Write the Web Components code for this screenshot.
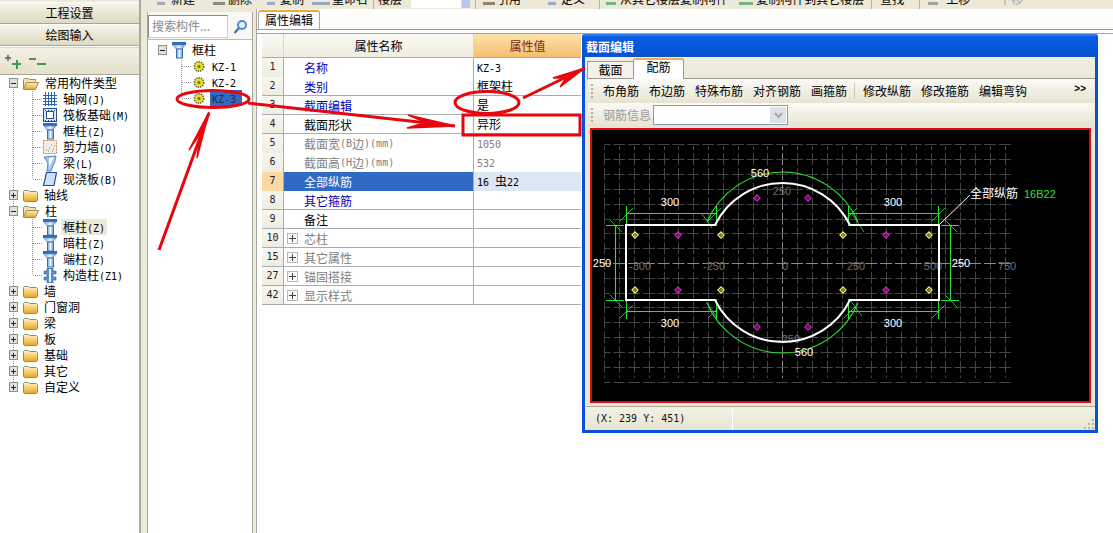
<!DOCTYPE html>
<html lang="zh">
<head>
<meta charset="utf-8">
<title>截面编辑</title>
<style>
html,body{margin:0;padding:0;height:533px;overflow:hidden;background:#ECE9D8}
body{font:12px/16px "Noto Sans CJK SC","Liberation Sans",sans-serif;color:#000}
.m{font-family:"DejaVu Sans Mono","Liberation Mono",monospace;font-size:10px}
</style>
</head>
<body>
<app-shell>
  <side-panel slot="left">
    <tree-row level="0" exp="-" icon="folderopen" first>常用构件类型</tree-row>
    <tree-row level="1" icon="grid">轴网<span class="m">(J)</span></tree-row>
    <tree-row level="1" icon="raft">筏板基础<span class="m">(M)</span></tree-row>
    <tree-row level="1" icon="column">框柱<span class="m">(Z)</span></tree-row>
    <tree-row level="1" icon="wall">剪力墙<span class="m">(Q)</span></tree-row>
    <tree-row level="1" icon="beam">梁<span class="m">(L)</span></tree-row>
    <tree-row level="1" icon="slab" last>现浇板<span class="m">(B)</span></tree-row>
    <tree-row level="0" exp="+" icon="folder">轴线</tree-row>
    <tree-row level="0" exp="-" icon="folderopen">柱</tree-row>
    <tree-row level="1" icon="column" hover>框柱<span class="m">(Z)</span></tree-row>
    <tree-row level="1" icon="column">暗柱<span class="m">(Z)</span></tree-row>
    <tree-row level="1" icon="column">端柱<span class="m">(Z)</span></tree-row>
    <tree-row level="1" icon="cons" last>构造柱<span class="m">(Z1)</span></tree-row>
    <tree-row level="0" exp="+" icon="folder">墙</tree-row>
    <tree-row level="0" exp="+" icon="folder">门窗洞</tree-row>
    <tree-row level="0" exp="+" icon="folder">梁</tree-row>
    <tree-row level="0" exp="+" icon="folder">板</tree-row>
    <tree-row level="0" exp="+" icon="folder">基础</tree-row>
    <tree-row level="0" exp="+" icon="folder">其它</tree-row>
    <tree-row level="0" exp="+" icon="folder" last>自定义</tree-row>
  </side-panel>
  <top-toolbar slot="toolbar"></top-toolbar>
  <component-panel slot="list">
    <tree-row level="0" exp="-" icon="column" noline>框柱</tree-row>
    <tree-row level="1" icon="gear" noroot><span class="m">KZ-1</span></tree-row>
    <tree-row level="1" icon="gear" noroot><span class="m">KZ-2</span></tree-row>
    <tree-row level="1" icon="gear" noroot last sel><span class="m">KZ-3</span></tree-row>
  </component-panel>
  <prop-panel slot="main">
    <prop-row no="1" kind="link">名称<span slot="value" class="m">KZ-3</span></prop-row>
    <prop-row no="2" kind="link">类别<span slot="value">框架柱</span></prop-row>
    <prop-row no="3" kind="link">截面编辑<span slot="value">是</span></prop-row>
    <prop-row no="4">截面形状<span slot="value">异形</span></prop-row>
    <prop-row no="5" kind="gray">截面宽<span class="m">(B</span>边<span class="m">)(mm)</span><span slot="value" class="m" style="color:#808080">1050</span></prop-row>
    <prop-row no="6" kind="gray">截面高<span class="m">(H</span>边<span class="m">)(mm)</span><span slot="value" class="m" style="color:#808080">532</span></prop-row>
    <prop-row no="7" kind="sel">全部纵筋<span slot="value"><span class="m">16 </span>虫<span class="m">22</span></span></prop-row>
    <prop-row no="8" kind="link">其它箍筋</prop-row>
    <prop-row no="9">备注</prop-row>
    <prop-row no="10" kind="gray" exp>芯柱</prop-row>
    <prop-row no="15" kind="gray" exp>其它属性</prop-row>
    <prop-row no="27" kind="gray" exp>锚固搭接</prop-row>
    <prop-row no="42" kind="gray" exp>显示样式</prop-row>
  </prop-panel>
  <section-dialog slot="overlay" caption="截面编辑">
    <rebar-canvas></rebar-canvas>
  </section-dialog>
  <red-marks slot="overlay"></red-marks>
</app-shell>

<script>
const ICONS = {
  folder:`<svg width="15" height="13" viewBox="0 0 15 13"><defs><linearGradient id="f" x1="0" y1="0" x2="0" y2="1"><stop offset="0" stop-color="#FFF6C8"/><stop offset="1" stop-color="#E9A51E"/></linearGradient></defs><path d="M.5 2.500 1.500 1.500h4l1 1h7l1 1v8l-1 1h-12l-1-1z" fill="url(#f)" stroke="#9A8A60"/></svg>`,
  folderopen:`<svg width="16" height="13" viewBox="0 0 16 13"><defs><linearGradient id="f" x1="0" y1="0" x2="0" y2="1"><stop offset="0" stop-color="#FFF2B8"/><stop offset="1" stop-color="#E9A51E"/></linearGradient></defs><path d="M.5 12V2.500l1-1h4l1 1h6v2" fill="#F3E3B0" stroke="#9A8A60"/><path d="M.5 12.500 3.500 5.500h12l-3 7z" fill="url(#f)" stroke="#9A8A60"/></svg>`,
  column:`<svg width="14" height="17" viewBox="0 0 14 17"><defs><linearGradient id="c" x1="0" y1="0" x2="1" y2="0"><stop offset="0" stop-color="#6FA0DC"/><stop offset=".5" stop-color="#F2F7FD"/><stop offset="1" stop-color="#5F90CC"/></linearGradient></defs><rect x="0" y="0" width="14" height="3" fill="#2F6DB8"/><path d="M1 3h12L10 7H4z" fill="url(#c)" stroke="#5F90CC" stroke-width=".6"/><rect x="4.500" y="7" width="6" height="9" fill="url(#c)" stroke="#2F6DB8"/></svg>`,
  grid:`<svg width="14" height="14" viewBox="0 0 14 14" stroke="#2E62B0" shape-rendering="crispEdges"><path d="M0 3.500h14M0 6.500h14M0 9.500h14M0 12.500h14M2.500 0v14M5.500 0v14M8.500 0v14M11.500 0v14" fill="none"/></svg>`,
  raft:`<svg width="14" height="14" viewBox="0 0 14 14" shape-rendering="crispEdges"><rect x=".5" y=".5" width="13" height="13" fill="#DDE8F6" stroke="#1F4F9A" stroke-width="1.200"/><rect x="3.500" y="3.500" width="7" height="7" fill="#fff" stroke="#1F4F9A"/><path d="M2 2h1M5 2h1M8 2h1M11 2h1M2 12h1M5 12h1M8 12h1M11 12h1" stroke="#1F4F9A"/></svg>`,
  wall:`<svg width="14" height="14" viewBox="0 0 14 14"><rect x=".5" y=".5" width="13" height="13" fill="#F2EEE6" stroke="#C88A50" stroke-dasharray="2 1"/><path d="M3 10h1M6 8h1M9 11h1M11 6h1M5 11h1M8 5h1M10 9h1" stroke="#8A8A90"/></svg>`,
  beam:`<svg width="14" height="17" viewBox="0 0 14 17"><path d="M1 2 13 1 12 6 8 16 4 16 5 8z" fill="#A9C8EA" stroke="#4F86C6"/><path d="M6 3 11 2 6 12z" fill="#fff"/></svg>`,
  slab:`<svg width="14" height="14" viewBox="0 0 14 14"><path d="M3.500 .5H13.500L11 13.500H.5z" fill="#CFE0F4" stroke="#1F4F9A" stroke-width="1.200"/></svg>`,
  cons:`<svg width="14" height="15" viewBox="0 0 14 15"><path d="M4 0h6v3h3v3h-3v3h3v3h-3v3H4v-3H1V9h3V6H1V3h3z" fill="#5F8ECC" stroke="#2F5FA8" stroke-width=".6"/><path d="M6 1h2v13H6z" fill="#E8F0FA"/></svg>`,
  gear:`<svg width="14" height="13" viewBox="0 0 14 13"><circle cx="7" cy="6.500" r="4.500" fill="#E7DC2E"/><circle cx="7" cy="6.500" r="4.800" fill="none" stroke="#5A5A20" stroke-width="1.400" stroke-dasharray="1.400 1"/><circle cx="7" cy="6.500" r="1.500" fill="#6A6A20"/></svg>`
};
function define(name, cls){ customElements.define(name, cls); }

define('ui-icon', class extends HTMLElement{
  connectedCallback(){
    if(this.shadowRoot) return;
    const s=this.attachShadow({mode:'open'});
    s.innerHTML=`<style>:host{display:inline-flex;align-items:center;justify-content:center}svg{display:block}</style>`+(ICONS[this.getAttribute('name')]||'');
  }
});

define('tree-row', class extends HTMLElement{
  connectedCallback(){
    if(this.shadowRoot) return;
    const a=n=>this.hasAttribute(n), lvl=+this.getAttribute('level');
    const dot='stroke="#9A9A9A" stroke-dasharray="1 1" shape-rendering="crispEdges"';
    let g='', w=lvl?43:23;
    if(lvl===0){
      if(!a('noline')) g+=`<path d="M13.500 ${a('first')?8:0}V${a('last')?8:16}" ${dot}/>`;
      const sign=this.getAttribute('exp');
      g+=`<rect x="9.500" y="3.500" width="8" height="9" fill="#E4E2D8" stroke="#8E8E8E" shape-rendering="crispEdges"/><path d="M11 8.500h5${sign==='+'?'M13.500 6v5':''}" stroke="#222" shape-rendering="crispEdges"/>`;
    }else{
      if(!a('noroot')) g+=`<path d="M13.500 0V16" ${dot}/>`;
      g+=`<path d="M32.500 0V${a('last')?8:16}M32.500 8.500H43" ${dot}/>`;
    }
    const s=this.attachShadow({mode:'open'});
    s.innerHTML=`<style>
      :host{display:flex;height:16px;align-items:center;white-space:nowrap}
      svg.g{flex:none;display:block}
      ui-icon{flex:none;height:16px}
      .l{margin-left:${lvl?4:6}px;padding:0 2px;line-height:16px;height:16px;${lvl?'':'padding-left:0;'}}
      :host([hover]) .l{background:#ECE9D8}
      :host([sel]) .l{background:#316AC5;color:#1c2a50;padding:0 6px 0 2px}
    </style><svg class="g" width="${w}" height="16">${g}</svg><ui-icon name="${this.getAttribute('icon')}"></ui-icon><span class="l"><slot></slot></span>`;
  }
});

define('app-shell', class extends HTMLElement{
  constructor(){super();this.attachShadow({mode:'open'}).innerHTML=`<style>
    :host{display:flex;position:relative;width:1113px;height:533px;overflow:hidden;background:#ECE9D8}
    .r{flex:1;display:flex;flex-direction:column;min-width:0}
    .b{flex:1;display:flex;min-height:0}
    ::slotted([slot=left]){flex:none}
  </style>
  <slot name="left"></slot>
  <div class="r"><slot name="toolbar"></slot><div class="b"><slot name="list"></slot><slot name="main"></slot></div></div>
  <slot name="overlay"></slot>`;}
});

define('side-button', class extends HTMLElement{
  constructor(){super();this.attachShadow({mode:'open'}).innerHTML=`<style>
    :host{display:flex;align-items:center;justify-content:center;height:20px;background:linear-gradient(#F6F4E9,#DDD9C3);border-top:1px solid #fff;border-bottom:1px solid #A9A691}
  </style><slot></slot>`;}
});

define('side-panel', class extends HTMLElement{
  constructor(){super();this.attachShadow({mode:'open'}).innerHTML=`<style>
    :host{display:flex;flex-direction:column;width:141px;height:533px;padding-top:2px;box-sizing:border-box;border-right:2px solid #A8A8A0;margin-right:6px;background:#fff;position:relative}
    .btns{background:#ECE9D8;margin-top:-2px;padding-top:2px}
    .tools{display:flex;align-items:flex-start;gap:2px;padding:6px 0 0 4px;box-sizing:border-box;background:linear-gradient(#F3F1E4,#E4E0CC);border-top:1px solid #D8D5C2;border-bottom:1px solid #A9A691;margin-top:1px;height:28px}
    .tree{flex:1}
    svg{display:block;flex:none}
  </style>
  <div class="btns"><side-button>工程设置</side-button><side-button>绘图输入</side-button></div>
  <div class="tools">
    <svg width="21" height="16" shape-rendering="crispEdges"><path d="M1 4h6M4 1v6" stroke="#777" stroke-width="2" fill="none"/><path d="M8 10h9M12.500 6v9" stroke="#3F9A4A" stroke-width="2"/></svg>
    <svg width="20" height="16" shape-rendering="crispEdges"><path d="M2 5h7" stroke="#777" stroke-width="2"/><path d="M10 10h9" stroke="#3F9A4A" stroke-width="2"/></svg>
  </div>
  <div class="tree"><slot></slot></div>`;}
});

define('top-toolbar', class extends HTMLElement{
  connectedCallback(){
    if(this.shadowRoot) return;
    const ic=(w,ml,c='#7F98BC')=>`<i style="width:${w}px;margin-left:${ml}px;background:${c}"></i>`;
    const tx=(t,ml,g)=>`<span style="margin-left:${ml}px${g?';color:#a8a8a0':''}">${t}</span>`;
    const sep=ml=>`<b style="margin-left:${ml}px"></b>`;
    this.attachShadow({mode:'open'}).innerHTML=`<style>
      :host{display:flex;flex:none;height:9px;overflow:hidden;align-items:flex-end;background:#ECE9D8;padding:0 0 3px 10px;box-sizing:border-box;white-space:nowrap}
      span{line-height:14px;flex:none;display:block;height:14px}
      i{display:block;height:3px;flex:none;margin-bottom:1px;opacity:.75}
      b{display:block;width:1px;height:9px;background:#B5B29E;flex:none;margin-bottom:-3px}
      u{display:block;flex:none;width:59px;height:8px;margin:0 0 -2px 9px;background:linear-gradient(90deg,#fff 85%,#B8C8E8 86%);text-decoration:none}
    </style>
    ${ic(8,0,'#8A97A8')}${tx('新建',6)}${ic(12,18,'#6A6A6A')}${tx('删除',3)}${ic(8,15)}${tx('复制',5)}${ic(18,8,'#8090B0')}${tx('重命名',2)}${sep(5)}${tx('楼层',4)}<u></u>${sep(5)}${ic(12,7,'#7A5A50')}${tx('引用',2)}${ic(8,27)}${tx('定义',5)}${sep(14)}${ic(10,6,'#4FA060')}${tx('从其它楼层复制构件',4)}${ic(14,11,'#4FA060')}${tx('复制构件到其它楼层',3)}${sep(7)}${tx('查找',8)}${sep(15)}${ic(10,8,'#8A8A8A')}${tx('上移',8)}${tx('下移',29,1)}`;
  }
});

define('component-panel', class extends HTMLElement{
  constructor(){super();this.attachShadow({mode:'open'}).innerHTML=`<style>
    :host{display:flex;flex-direction:column;flex:none;width:106px;margin-top:3px;box-sizing:border-box;border-left:1px solid #A8A8A0;border-right:1px solid #A8A8A0;margin-right:3px;background:#fff;height:521px}
    .s{display:flex;align-items:flex-start;height:28px;padding-top:3px;flex:none;background:#F8F7F2;box-sizing:border-box;border-bottom:1px solid #BDBCB0}
    .i{width:80px;height:23px;box-sizing:border-box;border:1px solid #8A8A8A;border-right-color:#ccc;border-bottom-color:#ccc;background:#fff;color:#8a8a8a;padding-left:3px;line-height:19px;white-space:nowrap;overflow:hidden}
    svg{margin:4px 0 0 4px;display:block}
    .t{padding:2px 0 0 1px}
  </style>
  <div class="s"><div class="i">搜索构件...</div>
    <svg width="16" height="16"><circle cx="10" cy="6" r="4" fill="#E6F0FA" stroke="#4A90D0" stroke-width="2"/><path d="M7 9 2.500 14" stroke="#3A7CC0" stroke-width="2.400"/></svg></div>
  <div class="t"><slot></slot></div>`;}
});

define('prop-panel', class extends HTMLElement{
  constructor(){super();this.attachShadow({mode:'open'}).innerHTML=`<style>
    :host{display:flex;flex-direction:column;flex:1;min-width:0;background:#fff;border-left:1px solid #A8A8A0;box-sizing:border-box;height:524px}
    .strip{height:21px;flex:none;box-sizing:border-box;border-bottom:1px solid #9A9A9A;background:linear-gradient(#fff,#FBFBF8);padding:1px 0 0 1px}
    .tab{width:62px;height:19px;box-sizing:border-box;border:1px solid #A8A8A0;border-bottom:0;border-top:2px solid #EDA93A;border-radius:3px 3px 0 0;background:#fff;text-align:center;line-height:16px}
    .body{flex:1;margin-top:3px;border-top:1px solid #8FA6B8;padding-left:5px}
    .grid{width:319px}
    .head{display:grid;grid-template-columns:22px 190px 107px;height:24px;line-height:23px;text-align:center;box-sizing:border-box;border-bottom:1px solid #A8ACB4}
    .head div{background:linear-gradient(#FBFAF5,#EFEDE1);border-right:1px solid #D8D6C8}
    .head div:last-child{background:linear-gradient(#FCE3AE,#F3BE6E);color:#7A2C10;border-right:0}
  </style>
  <div class="strip"><div class="tab">属性编辑</div></div>
  <div class="body"><div class="grid">
    <div class="head"><div></div><div>属性名称</div><div>属性值</div></div>
    <slot></slot>
  </div></div>`;}
});

define('prop-row', class extends HTMLElement{
  connectedCallback(){
    if(this.shadowRoot) return;
    const k=this.getAttribute('kind')||'', no=this.getAttribute('no'), exp=this.hasAttribute('exp');
    this.attachShadow({mode:'open'}).innerHTML=`<style>
      :host{display:grid;grid-template-columns:22px 190px 107px;height:19px;box-sizing:border-box;line-height:17px;white-space:nowrap}
      .n{background:${k==='sel'?'#FBD9A0':'linear-gradient(#F8F7F0,#EEEDE2)'};border-bottom:1px solid #A8ACB4;border-right:1px solid #A8ACB4;text-align:center;font:10px/18px "DejaVu Sans Mono","Liberation Mono",monospace;color:#222}
      .a{display:flex;align-items:center;border-bottom:1px solid #A8ACB4;border-right:1px solid #A8ACB4;padding-left:${exp?'3px':'20px'};color:${k==='link'?'#0000C0':k==='gray'?'#808080':k==='sel'?'#fff':'#000'};background:${k==='sel'?'#316AC5':'#fff'}}
      .v{border-bottom:1px solid #A8ACB4;padding-left:3px;background:${k==='sel'?'#DCE6F4':'#fff'}}
      .x{width:11px;height:11px;box-sizing:border-box;border:1px solid #B8B8B0;margin-right:6px;flex:none;background:
        linear-gradient(#444,#444) center/7px 1px no-repeat,linear-gradient(#444,#444) center/1px 7px no-repeat,#FAFAF6}
    </style><div class="n">${no}</div><div class="a">${exp?'<div class="x"></div>':''}<slot></slot></div><div class="v"><slot name="value"></slot></div>`;
  }
});

define('section-dialog', class extends HTMLElement{
  connectedCallback(){
    if(this.shadowRoot) return;
    const cap=this.getAttribute('caption');
    const tools=[['布角筋',0],['布边筋',10],['特殊布筋',10],['对齐钢筋',10],['画箍筋',10]];
    const tools2=[['修改纵筋',0],['修改箍筋',10],['编辑弯钩',10]];
    const t=a=>a.map(([x,m])=>`<span style="margin-left:${m}px">${x}</span>`).join('');
    this.attachShadow({mode:'open'}).innerHTML=`<style>
      :host{position:absolute;left:582px;top:34px;width:516px;height:399px;box-sizing:border-box;display:flex;flex-direction:column;background:#0A50D8;border:3px solid #0A50D8;border-top:0;border-radius:3px 3px 0 0;z-index:5}
      .title{height:23px;flex:none;margin:0 -3px;padding-left:4px;color:#fff;font-weight:700;line-height:25px;background:linear-gradient(#3A86F0 0,#0A5CE0 3px,#0458DC 60%,#0A50D0 100%);border-radius:3px 3px 0 0}
      .client{flex:1;display:flex;flex-direction:column;background:#ECE9D8;min-height:0}
      .tabs{height:21px;flex:none;display:flex;align-items:flex-end;padding-left:2px;box-sizing:border-box;background:linear-gradient(#F2EFE0,#ECE9D8)}
      .tab{box-sizing:border-box;text-align:center;border:1px solid #9A9A90;border-bottom:0}
      .t1{width:46px;height:17px;line-height:15px;background:#F4F2E8;border-right:0}
      .t2{width:51px;height:21px;line-height:13px;background:#fff;border-top:2px solid #EDB24A;border-radius:3px 3px 0 0;margin-bottom:-1px;position:relative}
      .pane{flex:1;display:flex;flex-direction:column;min-height:0;background:#ECE9D8;border-top:1px solid #9A9A90;margin:0 0 0 2px;padding:0 1px}
      .tb{display:flex;align-items:center;flex:none;height:24px;white-space:nowrap;background:linear-gradient(#FBFAF6,#E6E3D0);position:relative}
      .grip{width:2px;height:15px;margin:0 10px 0 3px;flex:none;background:repeating-linear-gradient(#B0AD98 0 2px,transparent 2px 4px)}
      .sep{width:1px;height:16px;background:#C8C6B4;margin:0 8px 0 7px}
      .more{position:absolute;right:8px;top:3px;font:700 10px/14px "Liberation Sans",sans-serif}
      .dis{color:#9A9A9A}
      .combo{width:135px;height:20px;box-sizing:border-box;border:1px solid #7F9DB9;background:#fff;margin-left:2px;display:flex;justify-content:flex-end;align-items:center;padding-right:1px}
      .btn{width:16px;height:16px;background:#DDE2E8;display:flex;align-items:center;justify-content:center}
      .cv{flex:1;min-height:0;display:flex;margin:1px 3px 0 2px}
      .status{flex:none;height:24px;box-sizing:border-box;margin:3px -1px 0 -2px;display:flex;align-items:center;border-top:1px solid #A8A694;background:linear-gradient(#F3F1E5,#E8E5D2);position:relative}
      .status span{width:137px;padding-left:9px;font:10px/22px "DejaVu Sans Mono","Liberation Mono",monospace;border-right:1px solid #fff;height:22px;color:#111;white-space:nowrap}
      .status svg{position:absolute;right:0;bottom:0}
    </style>
    <div class="title">${cap}</div>
    <div class="client">
      <div class="tabs"><div class="tab t1">截面</div><div class="tab t2">配筋</div></div>
      <div class="pane">
        <div class="tb"><div class="grip"></div>${t(tools)}<div class="sep"></div>${t(tools2)}<div class="more">&gt;&gt;</div></div>
        <div class="tb"><div class="grip"></div><span class="dis">钢筋信息</span><div class="combo"><div class="btn"><svg width="9" height="7"><path d="M1 1l3.500 4L8 1" fill="none" stroke="#A8A8A8" stroke-width="2"/></svg></div></div></div>
        <div class="cv"><slot></slot></div>
        <div class="status"><span>(X: 239 Y: 451)</span><svg width="12" height="12" fill="#B8B5A2"><path d="M9 1h2v2H9zM5 5h2v2H5zM9 5h2v2H9zM1 9h2v2H1zM5 9h2v2H5zM9 9h2v2H9z"/></svg></div>
      </div>
    </div>`;
  }
});

define('rebar-canvas', class extends HTMLElement{
  connectedCallback(){
    if(this.shadowRoot) return;
    const W='#fff', G='#2FE03A';
    let grid='';
    for(let k=-12;k<=15;k++){
      const x=Math.round(782.3+k*14.83)+.5, major=k===0;
      grid+=`<path d="M${x} 146V378" stroke="${major?'#8A8A8A':'#444'}" stroke-dasharray="12 2.830" stroke-dashoffset="7.640"/>`;
    }
    for(let k=-8;k<=8;k++){
      const y=Math.round(263+k*14.83)+.5, major=k===0;
      grid+=`<path d="M604 ${y}H1013" stroke="${major?'#8A8A8A':'#444'}" stroke-dasharray="12 2.830" stroke-dashoffset="5.660"/>`;
    }
    const lab=(t,x,y,c,f,a)=>`<text x="${x}" y="${y}" fill="${c}" font-size="${f||11}" text-anchor="${a||'middle'}">${t}</text>`;
    const labels=[['-300',640,270],['-250',714,270],['0',785,270],['250',856,270],['500',933,270],['750',1007,270],['250',782,195],['-250',789,343]]
      .map(([t,x,y])=>lab(t,x,y,'#6E6E6E')).join('');
    const dia=(x,y,c)=>`<path d="M${x} ${y-3}l3 3-3 3-3-3z" fill="none" stroke="${c}" stroke-width="1.300"/><rect x="${x-.7}" y="${y-.7}" width="1.500" height="1.500" fill="${c}"/>`;
    const Y='#F2EE60', M='#D21FC4';
    let bars='';
    [[635,Y],[678,M],[721,Y],[843,Y],[886,M],[929,Y]].forEach(([x,c])=>{bars+=dia(x,235,c)+dia(x,290,c);});
    [[757,198],[808,198],[757,327],[808,327]].forEach(([x,y])=>bars+=dia(x,y,M));
    const corner=`<path d="M626 213.500H716M626.500 206V226M716.500 206V226" />`;
    const mx='translate(1565,0) scale(-1,1)', my='translate(0,525) scale(1,-1)', mxy='translate(1565,525) scale(-1,-1)';
    const ticks=[[620,221,633,208],[708,221,721,208],[844,221,857,208],[932,221,945,208],
                 [620,318,633,305],[708,318,721,305],[844,318,857,305],[932,318,945,305],
                 [610,220,622,232],[945,220,957,232],[610,295,622,307],[945,295,957,307],
                 [702,214,712,228],[706,302,716,316],[852,214,864,232],[850,300,862,316]]
      .map(a=>`<path d="M${a[0]} ${a[1]}L${a[2]} ${a[3]}"/>`).join('');
    this.attachShadow({mode:'open'}).innerHTML=`<style>
      :host{display:block;flex:1;min-width:0;box-sizing:border-box;border:2px solid #DC0A0A;background:#000;overflow:hidden}
      svg{display:block;width:497px;height:271px;font-family:"Liberation Sans",sans-serif}
    </style>
    <svg viewBox="592 130 497 271">
      <g fill="none" stroke-width="1">${grid}</g>
      ${labels}
      <g fill="none" stroke="${G}" stroke-width="1.100">
        <g>${corner}</g><g transform="${mx}">${corner}</g><g transform="${my}">${corner}</g><g transform="${mxy}">${corner}</g>
        <path d="M615.500 225V300M950.500 225V300M606 225.500H624M606 300.500H624M941 225.500H959M941 300.500H959"/>
        <path d="M707 222A82 82 0 0 1 858 222M707 303A82 82 0 0 0 858 303"/>
        <g stroke-width=".8">${ticks}</g>
      </g>
      <path d="M850 225H939V300H850A75.200 75.200 0 0 1 715 300H626V225H715A75.200 75.200 0 0 1 850 225Z" fill="none" stroke="${W}" stroke-width="2"/>
      ${bars}
      <path d="M940 224 970 195" stroke="${W}"/>
      ${lab('300',670,206,W)}${lab('300',893,206,W)}${lab('300',670,327,W)}${lab('300',893,327,W)}
      ${lab('560',760,177,W)}${lab('560',804,356,W)}${lab('250',602,267,W)}${lab('250',961,267,W)}
      <text x="970" y="198" fill="${W}" font-size="12" font-family="Noto Sans CJK SC,sans-serif">全部纵筋</text>
      <text x="1024" y="198" fill="${G}" font-size="11">16B22</text>
    </svg>`;
  }
});

define('red-marks', class extends HTMLElement{
  constructor(){super();this.attachShadow({mode:'open'}).innerHTML=`<style>
    :host{position:absolute;left:0;top:0;width:1113px;height:533px;pointer-events:none;z-index:9}
    svg{display:block}
  </style>
  <svg width="1113" height="533" fill="none" stroke="#E8060E" stroke-width="3">
    <ellipse cx="213" cy="99" rx="36" ry="8.500"/>
    <ellipse cx="487" cy="102.500" rx="32" ry="11"/>
    <rect x="463" y="115" width="117" height="20"/>
    <path d="M159 250 209 113"/>
    <path d="M209 112 189 150 200 134 197 158Z" fill="#E8060E" stroke-width="1.500"/>
    <path d="M248 103 455 126"/>
    <path d="M455 126 408 115 426 122.500 407 128Z" fill="#E8060E" stroke-width="1.500"/>
    <path d="M523 98 585 68"/>
    <path d="M585 68 553 78 566 78 560 87Z" fill="#E8060E" stroke-width="1.500"/>
  </svg>`;}
});
</script>
</body>
</html>
